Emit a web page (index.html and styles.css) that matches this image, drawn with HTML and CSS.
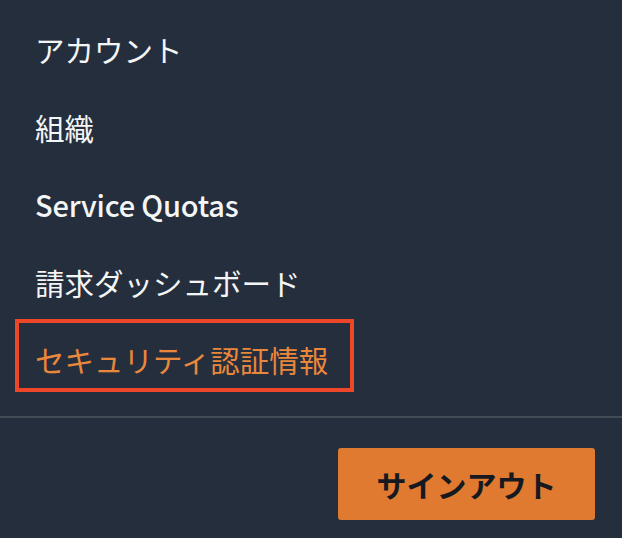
FILE: index.html
```html
<!DOCTYPE html>
<html lang="ja">
<head>
  <meta charset="UTF-8" />
  <title>アカウントメニュー</title>
  <link rel="stylesheet" href="styles.css">
</head>
<body>
  <div class="account-menu">
    <ul class="menu">
      <li><a class="menu-item" href="#">アカウント</a></li>
      <li><a class="menu-item" href="#">組織</a></li>
      <li><a class="menu-item latin" href="#">Service Quotas</a></li>
      <li><a class="menu-item" href="#">請求ダッシュボード</a></li>
      <li><a class="menu-item current" href="#">セキュリティ認証情報</a></li>
    </ul>
    <div class="menu-footer">
      <button class="signout">サインアウト</button>
    </div>
  </div>
</body>
</html>
```

FILE: styles.css
```css
body {
  margin: 0;
  background: #252e3d;
  font-family: "Noto Sans CJK JP", "Noto Sans", sans-serif;
}
.account-menu {
  width: 622px;
  height: 538px;
  overflow: hidden;
}
.menu {
  list-style: none;
  margin: 0;
  padding: 11px 0 0;
}
.menu-item {
  display: block;
  padding: 18px 35px;
  line-height: 41.5px;
  font-size: 29.5px;
  color: #f4f5f5;
  text-decoration: none;
}
.menu-item.latin {
  font-size: 29px;
  font-weight: 500;
  letter-spacing: -0.2px;
}
.menu-item.current {
  margin: -2px 268px 0 15px;
  padding: 16px 16px 7px;
  border: 4px solid #ee4628;
  color: #e9873b;
}
.menu-footer {
  margin-top: 24px;
  border-top: 2px solid #414c56;
  display: flex;
  justify-content: flex-end;
  padding: 30px 27px 0 0;
}
.signout {
  width: 257px;
  height: 72px;
  border: none;
  border-radius: 3px;
  background: #e07a30;
  color: #16191f;
  font-family: "Noto Sans CJK JP", "Noto Sans", sans-serif;
  font-size: 30px;
  font-weight: bold;
  cursor: pointer;
}
```
